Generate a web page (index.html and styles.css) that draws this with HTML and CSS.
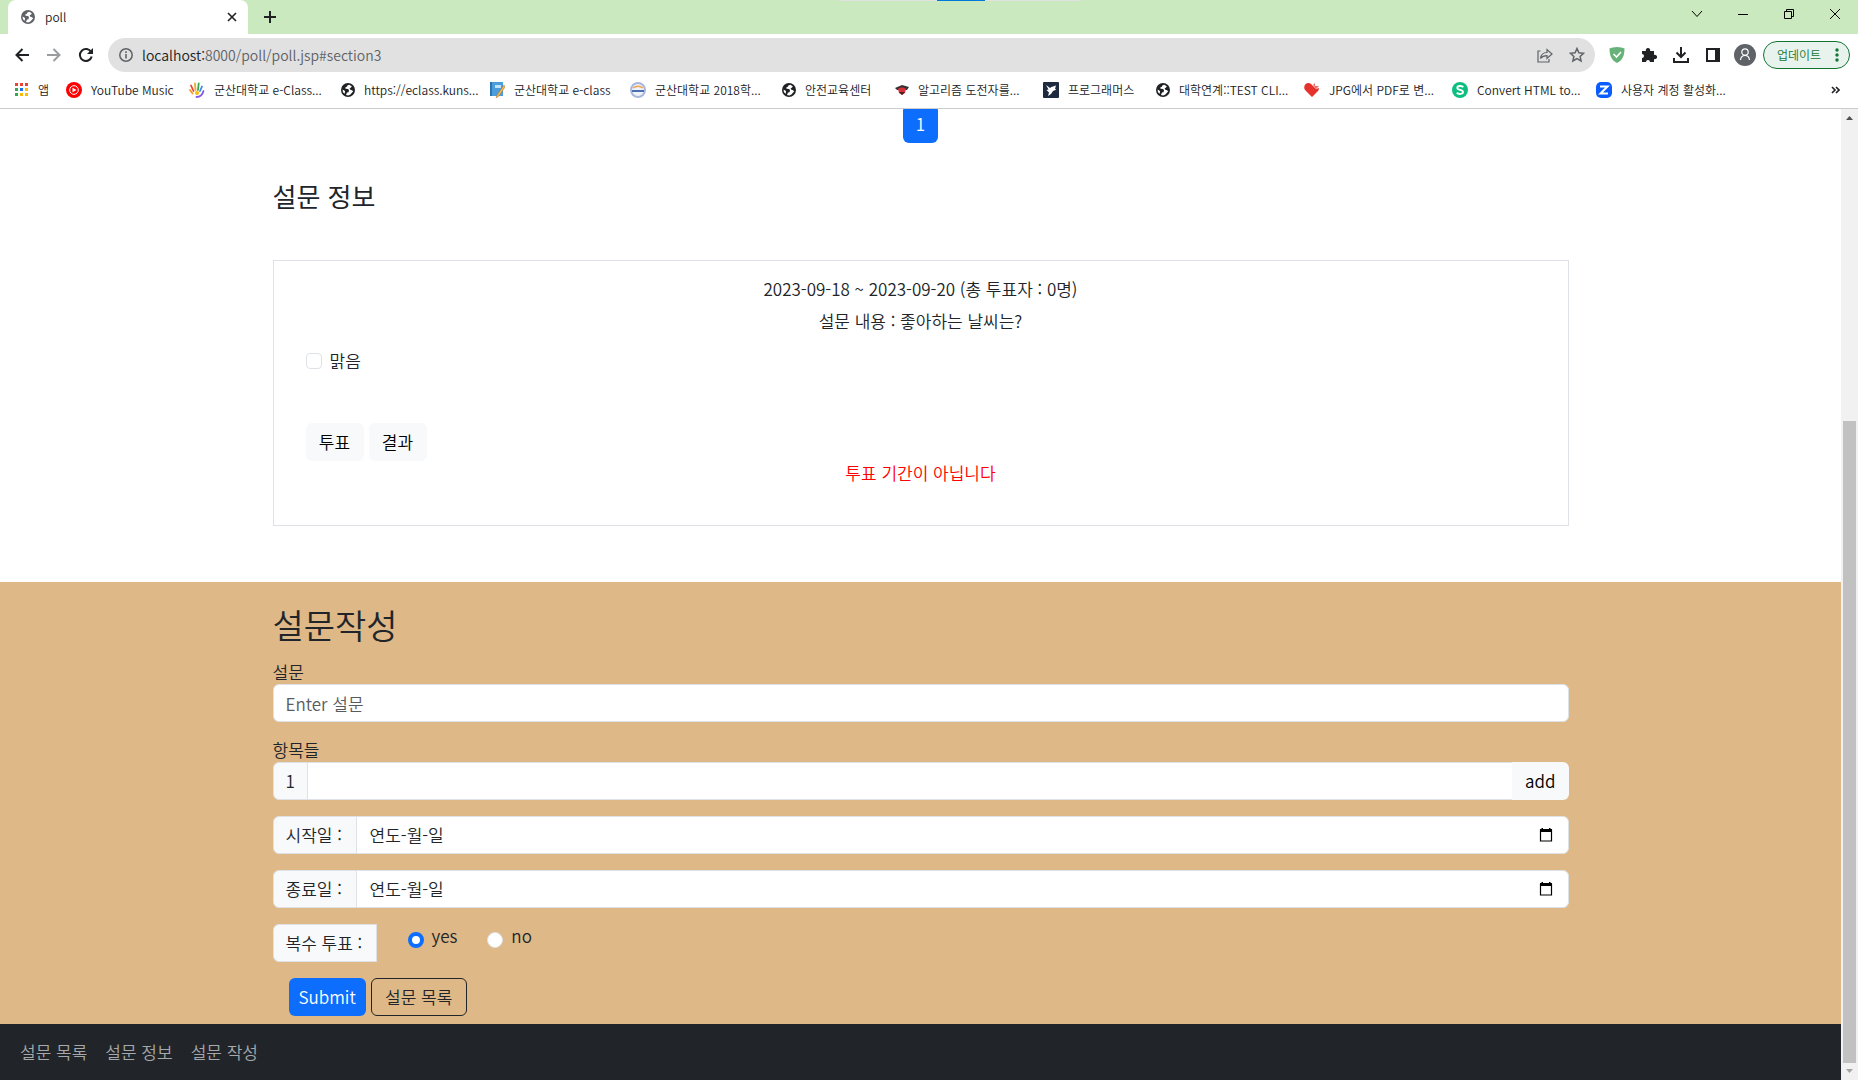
FILE: index.html
```html
<!DOCTYPE html>
<html lang="ko">
<head>
<meta charset="utf-8">
<title>poll</title>
<link rel="stylesheet" href="styles.css">
</head>
<body>
<svg class="defs" aria-hidden="true">
  <symbol id="globe" viewBox="0 0 14 14"><circle cx="7" cy="7" r="7" fill="currentColor"/><path d="M8.2 1.7 6.4 2.5 5.8 3.8 4.3 4.5 4.5 5.8 7.2 6 8 7.4 7.5 9.2 6 9.6 5 11.9 7.2 12.4 9.4 11.6 12.2 8.2 11 7.2 9.4 6.8 8.6 5.5 10 4.5 10.8 3.2ZM1.6 6.5 4 8.1 3.8 10.8 1.9 9.2Z" fill="#fff"/></symbol>
  <symbol id="calendar" viewBox="0 0 14 16"><path d="M1.5 3h11v11h-11z" fill="none" stroke="#000" stroke-width="1.2"/><path d="M1 2h12v3H1zM2.5 1H4v2H2.500zM10 1h1.500v2H10z" fill="#000"/></symbol>
</svg>

<header class="browser">
  <div class="tabstrip">
    <div class="tab">
      <svg class="tab-icon" width="14" height="14"><use href="#globe"/></svg>
      <span class="tab-title">poll</span>
      <button class="icon-btn" aria-label="탭 닫기"><svg width="10" height="10" viewBox="0 0 10 10"><path d="m1 1 8 8M9 1 1 9" stroke="#202124" stroke-width="1.600"/></svg></button>
    </div>
    <button class="icon-btn new-tab" aria-label="새 탭"><svg width="12" height="12" viewBox="0 0 12 12"><path d="M6 0v12M0 6h12" stroke="#202124" stroke-width="2"/></svg></button>
    <div class="window-controls">
      <button aria-label="탭 검색"><svg width="12" height="12" viewBox="0 0 12 12"><path d="m1 3 5 5.500L11 3" fill="none" stroke="#000"/></svg></button>
      <button aria-label="최소화"><svg width="10" height="11" viewBox="0 0 10 11"><path d="M0 5.500h10" stroke="#000"/></svg></button>
      <button aria-label="이전 크기로"><svg width="10" height="10" viewBox="0 0 10 10"><path d="M.5 2.500h7v7h-7zM2.500 2.500v-2h7v7h-2" fill="none" stroke="#000"/></svg></button>
      <button aria-label="닫기"><svg width="10" height="10" viewBox="0 0 10 10"><path d="m0 0 10 10M10 0 0 10" stroke="#000"/></svg></button>
    </div>
    <div class="drag-handle"><span></span></div>
  </div>

  <div class="toolbar">
    <div class="nav-buttons">
      <button class="icon-btn" aria-label="뒤로"><svg width="14" height="14" viewBox="0 0 14 14"><path d="M14 7H2M7.500 1 1.500 7l6 6" fill="none" stroke="#202124" stroke-width="2"/></svg></button>
      <button class="icon-btn" aria-label="앞으로"><svg width="14" height="14" viewBox="0 0 14 14"><path d="M0 7h12M6.500 1l6 6-6 6" fill="none" stroke="#9a9c9e" stroke-width="2"/></svg></button>
      <button class="icon-btn" aria-label="새로고침"><svg width="16" height="16" viewBox="0 0 16 16"><path d="M13.200 5.200A6 6 0 1 0 13.700 9.500" fill="none" stroke="#202124" stroke-width="2"/><path d="M15 1v6H9z" fill="#202124"/></svg></button>
    </div>
    <div class="omnibox">
      <svg width="14" height="14" viewBox="0 0 14 14"><circle cx="7" cy="7" r="6.200" fill="none" stroke="#5f6368" stroke-width="1.500"/><path d="M7 6v4.500M7 3.300v1.600" stroke="#5f6368" stroke-width="1.600"/></svg>
      <span class="url"><b>localhost:</b>8000/poll/poll.jsp#section3</span>
      <button class="icon-btn" aria-label="공유"><svg width="16" height="16" viewBox="0 0 16 16"><path d="M3.500 4H1v11h11v-3M3.500 11.500C4 8 6 5.500 10 5.500V2.500L15 7l-5 4.500V8.700c-3 0-5 .8-6.500 2.800z" fill="none" stroke="#5f6368" stroke-width="1.200"/></svg></button>
      <button class="icon-btn" aria-label="북마크"><svg width="16" height="16" viewBox="0 0 16 16"><path d="m8 1.500 1.900 4.300 4.700.5-3.500 3.100 1 4.600L8 11.600 3.900 14l1-4.600L1.400 6.300l4.700-.5z" fill="none" stroke="#5f6368" stroke-width="1.500"/></svg></button>
    </div>
    <div class="extensions">
      <button class="icon-btn" aria-label="AdGuard"><svg width="16" height="16" viewBox="0 0 16 16"><path d="M8 0c3 0 6 .8 7.500 1.500C15.500 8 14 13 8 16 2 13 .5 8 .5 1.500 2 .8 5 0 8 0z" fill="#67b279"/><path d="m4.500 7 3 3 4.500-5" fill="none" stroke="#fff" stroke-width="1.600"/></svg></button>
      <button class="icon-btn" aria-label="확장 프로그램"><svg width="16" height="16" viewBox="0 0 16 16"><path d="M1 4h4a2.200 2.200 0 1 1 4 0h4v4a2.200 2.200 0 1 1 0 4v3H9a2 2 0 0 0-4 0H1v-4a2 2 0 0 0 0-4z" fill="#202124"/></svg></button>
      <button class="icon-btn" aria-label="다운로드"><svg width="16" height="16" viewBox="0 0 16 16"><path d="M8 0v9M3.500 5.500 8 10l4.500-4.500M1 11v4h14v-4" fill="none" stroke="#202124" stroke-width="2"/></svg></button>
      <button class="icon-btn" aria-label="측면 패널"><svg width="14" height="14" viewBox="0 0 14 14"><path d="M1 1h12v12H1z" fill="none" stroke="#202124" stroke-width="2"/><path d="M9 1h4v12H9z" fill="#202124"/></svg></button>
      <button class="icon-btn" aria-label="프로필"><svg width="22" height="22" viewBox="0 0 22 22"><circle cx="11" cy="11" r="11" fill="#5f6368"/><circle cx="11" cy="8" r="3.200" fill="none" stroke="#fff" stroke-width="1.200"/><path d="M6.500 16c.3-3 2-4.500 4.500-4.500s4.200 1.500 4.500 4.500" fill="none" stroke="#fff" stroke-width="1.200"/></svg></button>
    </div>
    <button class="update">업데이트<svg width="4" height="14" viewBox="0 0 4 14" fill="#137333"><circle cx="2" cy="2" r="1.700"/><circle cx="2" cy="7" r="1.700"/><circle cx="2" cy="12" r="1.700"/></svg></button>
  </div>

  <nav class="bookmarks" aria-label="북마크">
    <a class="bm-apps" href="#"><svg width="14" height="14" viewBox="0 0 14 14"><path d="M0 0h3v3H0z" fill="#ea4335"/><path d="M5 0h3v3H5zM10 0h3v3h-3z" fill="#ea4335"/><path d="M0 5h3v3H0z" fill="#34a853"/><path d="M5 5h3v3H5z" fill="#1a73e8"/><path d="M10 5h3v3h-3zM10 10h3v3h-3zM5 10h3v3H5z" fill="#fbbc04"/><path d="M0 10h3v3H0z" fill="#34a853"/></svg>앱</a>
    <a class="bm-m" href="#"><svg width="16" height="16" viewBox="0 0 16 16"><circle cx="8" cy="8" r="8" fill="#f00"/><circle cx="8" cy="8" r="4.300" fill="none" stroke="#fff"/><path d="m6.500 5.700 4 2.300-4 2.300z" fill="#fff"/></svg>YouTube Music</a>
    <a class="bm-xl" href="#"><svg width="16" height="16" viewBox="0 0 16 16" fill="none" stroke-width="1.800" stroke-linecap="round"><path d="M4.500 9 2 3.500" stroke="#ea4335"/><path d="M3.500 11.500 1 8" stroke="#f59a23"/><path d="M6.500 8 6 1.500" stroke="#f5a623"/><path d="m9 8 .7-6.500" stroke="#34a853"/><path d="m11 9 2-4.500" stroke="#4285f4"/><path d="M14.500 9c-1 4-4 6-7 6" stroke="#8458e8"/><circle cx="8" cy="11" r="2" fill="#fbbc04"/></svg>군산대학교 e-Class...</a>
    <a class="bm-l" href="#"><svg class="dark" width="14" height="14"><use href="#globe"/></svg>https://eclass.kuns...</a>
    <a class="bm-note" href="#"><svg width="16" height="16" viewBox="0 0 16 16"><path d="M1 0h13v14H1z" fill="#4b9ddb"/><path d="M1 0h2v14H1z" fill="#2876b4"/><path d="M6 3h6v3H6z" fill="#c4e3f8"/><path d="m15 3-7 10-1 3 3-2 6-9z" fill="#f5b64c" stroke="#a96e35" stroke-width=".5"/></svg>군산대학교 e-class</a>
    <a class="bm-xl" href="#"><svg width="16" height="16" viewBox="0 0 16 16"><circle cx="8" cy="8" r="7" fill="#eef2fa" stroke="#a9b7dc" stroke-width="2"/><path d="M3 6c3-2 7-2 10 0" stroke="#f2a44d" stroke-width="1.500" fill="none"/><path d="M2 9h12" stroke="#4a6fb5" stroke-width="2"/></svg>군산대학교 2018학...</a>
    <a class="bm-s" href="#"><svg class="dark" width="14" height="14"><use href="#globe"/></svg>안전교육센터</a>
    <a class="bm-l" href="#"><svg width="14" height="12" viewBox="0 0 14 12"><path d="m0 4 7-3 7 2-2 3H2z" fill="#333"/><path d="M3 5c2-2 6-2 8 0l-1 4-3 2-3-2z" fill="#d8303c"/><path d="M4 8h6l-3 3z" fill="#422"/></svg>알고리즘 도전자를...</a>
    <a class="bm-s" href="#"><svg width="16" height="16" viewBox="0 0 16 16"><rect width="16" height="16" rx="1" fill="#1e2a3e"/><path d="m3 3 4 3 1.500-1L13 3.500 12 7l1.500.5L10 9l-2 3-3 2 1-3.500L3.500 8l2-.5z" fill="#fff"/></svg>프로그래머스</a>
    <a class="bm-l" href="#"><svg class="dark" width="14" height="14"><use href="#globe"/></svg>대학연계::TEST CLI...</a>
    <a class="bm-l" href="#"><svg width="16" height="14" viewBox="0 0 16 14"><path d="M8 14 1 7C-1 4 1 0 4.500 0 6 0 7.500 1 8 2l4 4 3-1c0 2-1 3-2 4z" fill="#e5322d"/><path d="m9 2 2-2v3h4l-3 3z" fill="#e5322d" opacity=".7"/></svg>JPG에서 PDF로 변...</a>
    <a class="bm-conv" href="#"><svg width="16" height="16" viewBox="0 0 16 16"><circle cx="8" cy="8" r="8" fill="#0cbf80"/><path d="M11.300 5.200C10 3.500 5.300 3.600 5.300 6c0 2.300 5.700 1.500 5.700 4 0 2.400-4.700 2.500-6.200.7" fill="none" stroke="#fff" stroke-width="1.900"/></svg>Convert HTML to...</a>
    <a class="bm-l" href="#"><svg width="16" height="16" viewBox="0 0 16 16"><rect width="16" height="16" rx="5" fill="#0b5cff"/><path d="M4 4.500h7.500L4.500 11.500H12" fill="none" stroke="#fff" stroke-width="2"/></svg>사용자 계정 활성화...</a>
    <button class="icon-btn more" aria-label="북마크 더보기"><svg width="9" height="8" viewBox="0 0 9 8"><path d="m1 1 3 3-3 3M5 1l3 3-3 3" fill="none" stroke="#202124" stroke-width="1.600"/></svg></button>
  </nav>
</header>

<div class="viewport">
  <main class="page">
    <div class="pager"><a href="#">1</a></div>

    <section class="container info">
      <h4>설문 정보</h4>
      <form class="poll-card">
        <p>2023-09-18 ~ 2023-09-20 (총 투표자 : 0명)</p>
        <p>설문 내용 : 좋아하는 날씨는?</p>
        <div class="choices">
          <label class="check"><input type="checkbox">맑음</label>
        </div>
        <div class="actions">
          <button type="button" class="btn light">투표</button>
          <button type="button" class="btn light">결과</button>
        </div>
        <p class="notice">투표 기간이 아닙니다</p>
      </form>
    </section>

    <section class="write">
      <form class="container">
        <h2>설문작성</h2>
        <label class="field-label" for="question">설문</label>
        <input class="control" id="question" type="text" placeholder="Enter 설문">
        <label class="field-label" for="item">항목들</label>
        <div class="group">
          <span class="addon">1</span>
          <input class="control" id="item" type="text">
          <button type="button" class="btn light">add</button>
        </div>
        <div class="group">
          <label class="addon addon-date" for="start">시작일 :</label>
          <div class="control date"><input id="start" type="text" value="연도-월-일"><button type="button" class="icon-btn" aria-label="시작일 선택"><svg width="14" height="16"><use href="#calendar"/></svg></button></div>
        </div>
        <div class="group">
          <label class="addon addon-date" for="end">종료일 :</label>
          <div class="control date"><input id="end" type="text" value="연도-월-일"><button type="button" class="icon-btn" aria-label="종료일 선택"><svg width="14" height="16"><use href="#calendar"/></svg></button></div>
        </div>
        <div class="group">
          <span class="addon addon-multi">복수 투표 :</span>
          <div class="radios">
            <label><input type="radio" name="multi" checked>yes</label>
            <label><input type="radio" name="multi">no</label>
          </div>
        </div>
        <div class="submit-row">
          <button type="button" class="btn primary">Submit</button>
          <button type="button" class="btn outline">설문 목록</button>
        </div>
      </form>
    </section>

    <nav class="bottom-nav">
      <a href="#">설문 목록</a>
      <a href="#">설문 정보</a>
      <a href="#">설문 작성</a>
    </nav>
  </main>
  <div class="scrollbar" aria-hidden="true">
    <svg width="17" height="17" viewBox="0 0 17 17"><path d="M5 11h7L8.500 7z" fill="#505050"/></svg>
    <div class="track"><div class="thumb"></div></div>
    <svg width="17" height="17" viewBox="0 0 17 17"><path d="M5 6h7L8.500 10z" fill="#a3a3a3"/></svg>
  </div>
</div>
</body>
</html>
```
FILE: styles.css
```css
* { box-sizing: border-box; }

body {
  margin: 0;
  min-height: 100vh;
  display: flex;
  flex-direction: column;
  font-family: "Noto Sans CJK KR", sans-serif;
  font-size: 17px;
  font-weight: 350;
  line-height: 24px;
  color: #212529;
  background: #fff;
}

button, input { font: inherit; color: inherit; }
button { border: 0; background: none; padding: 0; }
a { text-decoration: none; color: inherit; }
svg { display: block; flex: none; }
h2, h4, p { margin: 0; }
.defs { position: absolute; width: 0; height: 0; }
.icon-btn { display: flex; align-items: center; justify-content: center; flex: none; }

/* browser frame */
.browser { border-bottom: 1px solid #ccc; font-size: 12px; line-height: 16px; color: #202124; }

.tabstrip { position: relative; display: flex; height: 34px; background: #cbe9be; padding-left: 8px; }
.tab {
  display: flex; align-items: center; gap: 10px;
  width: 240px; padding: 0 11px 0 13px;
  background: #fff; border-radius: 8px 8px 0 0;
}
.tab-icon { color: #5f6368; }
.tab-title { flex: 1; }
.new-tab { width: 44px; }
.window-controls { display: flex; margin-left: auto; height: 28px; }
.window-controls button { width: 46px; display: flex; align-items: center; justify-content: center; }
.drag-handle { position: absolute; top: 0; left: 840px; width: 241px; height: 1px; background: #e1e1e1; }
.drag-handle span { display: block; width: 48px; height: 1px; margin: 0 auto; background: #0078d7; }

.toolbar { display: flex; align-items: center; height: 42px; padding: 0 8px 0 6px; }
.nav-buttons { display: flex; margin-right: 6px; }
.nav-buttons .icon-btn { width: 32px; height: 32px; }
.omnibox {
  flex: 1; display: flex; align-items: center; gap: 9px;
  height: 34px; padding: 0 10px 0 11px; border-radius: 17px; background: #e1e1e1;
}
.url { flex: 1; font-size: 14px; color: #5f6368; }
.url b { font-weight: inherit; color: #202124; }
.omnibox .icon-btn + .icon-btn { margin-left: 7px; }
.extensions { display: flex; margin: 0 2px 0 6px; }
.extensions .icon-btn { width: 32px; height: 32px; }
.update {
  display: flex; align-items: center; justify-content: space-between;
  width: 87px; height: 28px; padding: 0 10px 0 13px;
  border: 1px solid #137333; border-radius: 14px;
  background: #e9f3ee; color: #137333; font-size: 12px;
}

.bookmarks { display: flex; height: 32px; padding: 0 18px 4px 15px; }
.bookmarks a { display: flex; align-items: center; gap: 9px; white-space: nowrap; flex: none; }
.dark { color: #202124; }
.bm-apps { width: 51px; }
.bm-m { width: 123px; }
.bm-note { width: 141px; }
.bm-s { width: 113px; }
.bm-l { width: 148px; }
.bm-xl { width: 152px; }
.bm-conv { width: 144px; }
.more { margin-left: auto; }

/* page and scrollbar */
.viewport { flex: 1; display: flex; }
.page { flex: 1; min-width: 0; overflow: hidden; display: flex; flex-direction: column; }
.scrollbar { flex: none; width: 17px; display: flex; flex-direction: column; background: #f1f1f1; }
.track { flex: 1; display: flex; flex-direction: column; padding: 0 2px; }
.track::before { content: ""; flex: 295; }
.thumb { flex: 642; background: #c1c1c1; }

.container { width: 100%; max-width: 1320px; margin: 0 auto; padding: 0 12px; }

.pager { display: flex; justify-content: center; margin-top: -4px; }
.pager a { padding: 7px 13px; border-radius: 6px; background: #0d6efd; color: #fff; }

.info { padding-bottom: 56px; }
h4 { font-size: 26px; line-height: 30px; font-weight: 400; margin: 38px 0 49px; }
.poll-card { border: 1px solid #dee2e6; padding: 16px 32px 40px; text-align: center; }
.poll-card p + p { margin-top: 8px; }
.choices { display: flex; margin: 16px 0 50px; }
.check { display: flex; align-items: center; gap: 8px; }
.check input {
  appearance: none; width: 16px; height: 16px; margin: 0;
  border: 1px solid #dee2e6; border-radius: 4px; background: #fff;
}
.actions { display: flex; gap: 5px; }
.actions .btn { min-width: 58px; }
.notice { color: #f00; }

.btn { padding: 6px 12px; height: 38px; border: 1px solid transparent; border-radius: 6px; white-space: nowrap; }
.light { background: #f8f9fa; color: #000; }
.primary { background: #0d6efd; color: #fff; padding: 6px 9px; }
.outline { border-color: #212529; min-width: 96px; }

/* survey form */
.write { flex: 1; background: #deb887; padding: 24px 0 8px; }
h2 { font-size: 34px; line-height: 38px; font-weight: 350; margin-bottom: 16px; }
.field-label { display: block; }
.control {
  display: block; width: 100%; height: 38px; padding: 6px 12px;
  border: 1px solid #dee2e6; border-radius: 6px; background: #fff; outline: 0;
}
.control::placeholder { color: #595c5f; opacity: 1; }
#question { margin-bottom: 16px; }
.group { display: flex; margin-bottom: 16px; }
.addon {
  flex: none; height: 38px; padding: 6px 12px;
  border: 1px solid #dee2e6; border-radius: 6px 0 0 6px; background: #f8f9fa;
}
.addon-date { min-width: 84px; }
.addon-multi { min-width: 104px; }
.group .control { flex: 1; width: auto; min-width: 0; margin-left: -1px; border-radius: 0 6px 6px 0; }
.group #item { border-radius: 0; }
.group .btn { margin-left: -1px; border-radius: 0 6px 6px 0; }
.date { display: flex; align-items: center; padding: 6px 15px 6px 13px; }
.date input { flex: 1; min-width: 0; border: 0; padding: 0; background: none; outline: 0; }
.radios { display: flex; gap: 30px; margin-left: 31px; }
.radios label { display: flex; align-items: flex-start; gap: 8px; height: 24px; }
.radios input {
  appearance: none; width: 16px; height: 16px; margin: 8px 0 0;
  border: 1px solid #dee2e6; border-radius: 50%; background: #fff;
}
.radios input:checked { border: 4px solid #0d6efd; }
.submit-row { display: flex; gap: 5px; padding-left: 16px; }

.bottom-nav { display: flex; gap: 18px; padding: 16px 20px; background: #212529; color: #a6a8a9; }
```
